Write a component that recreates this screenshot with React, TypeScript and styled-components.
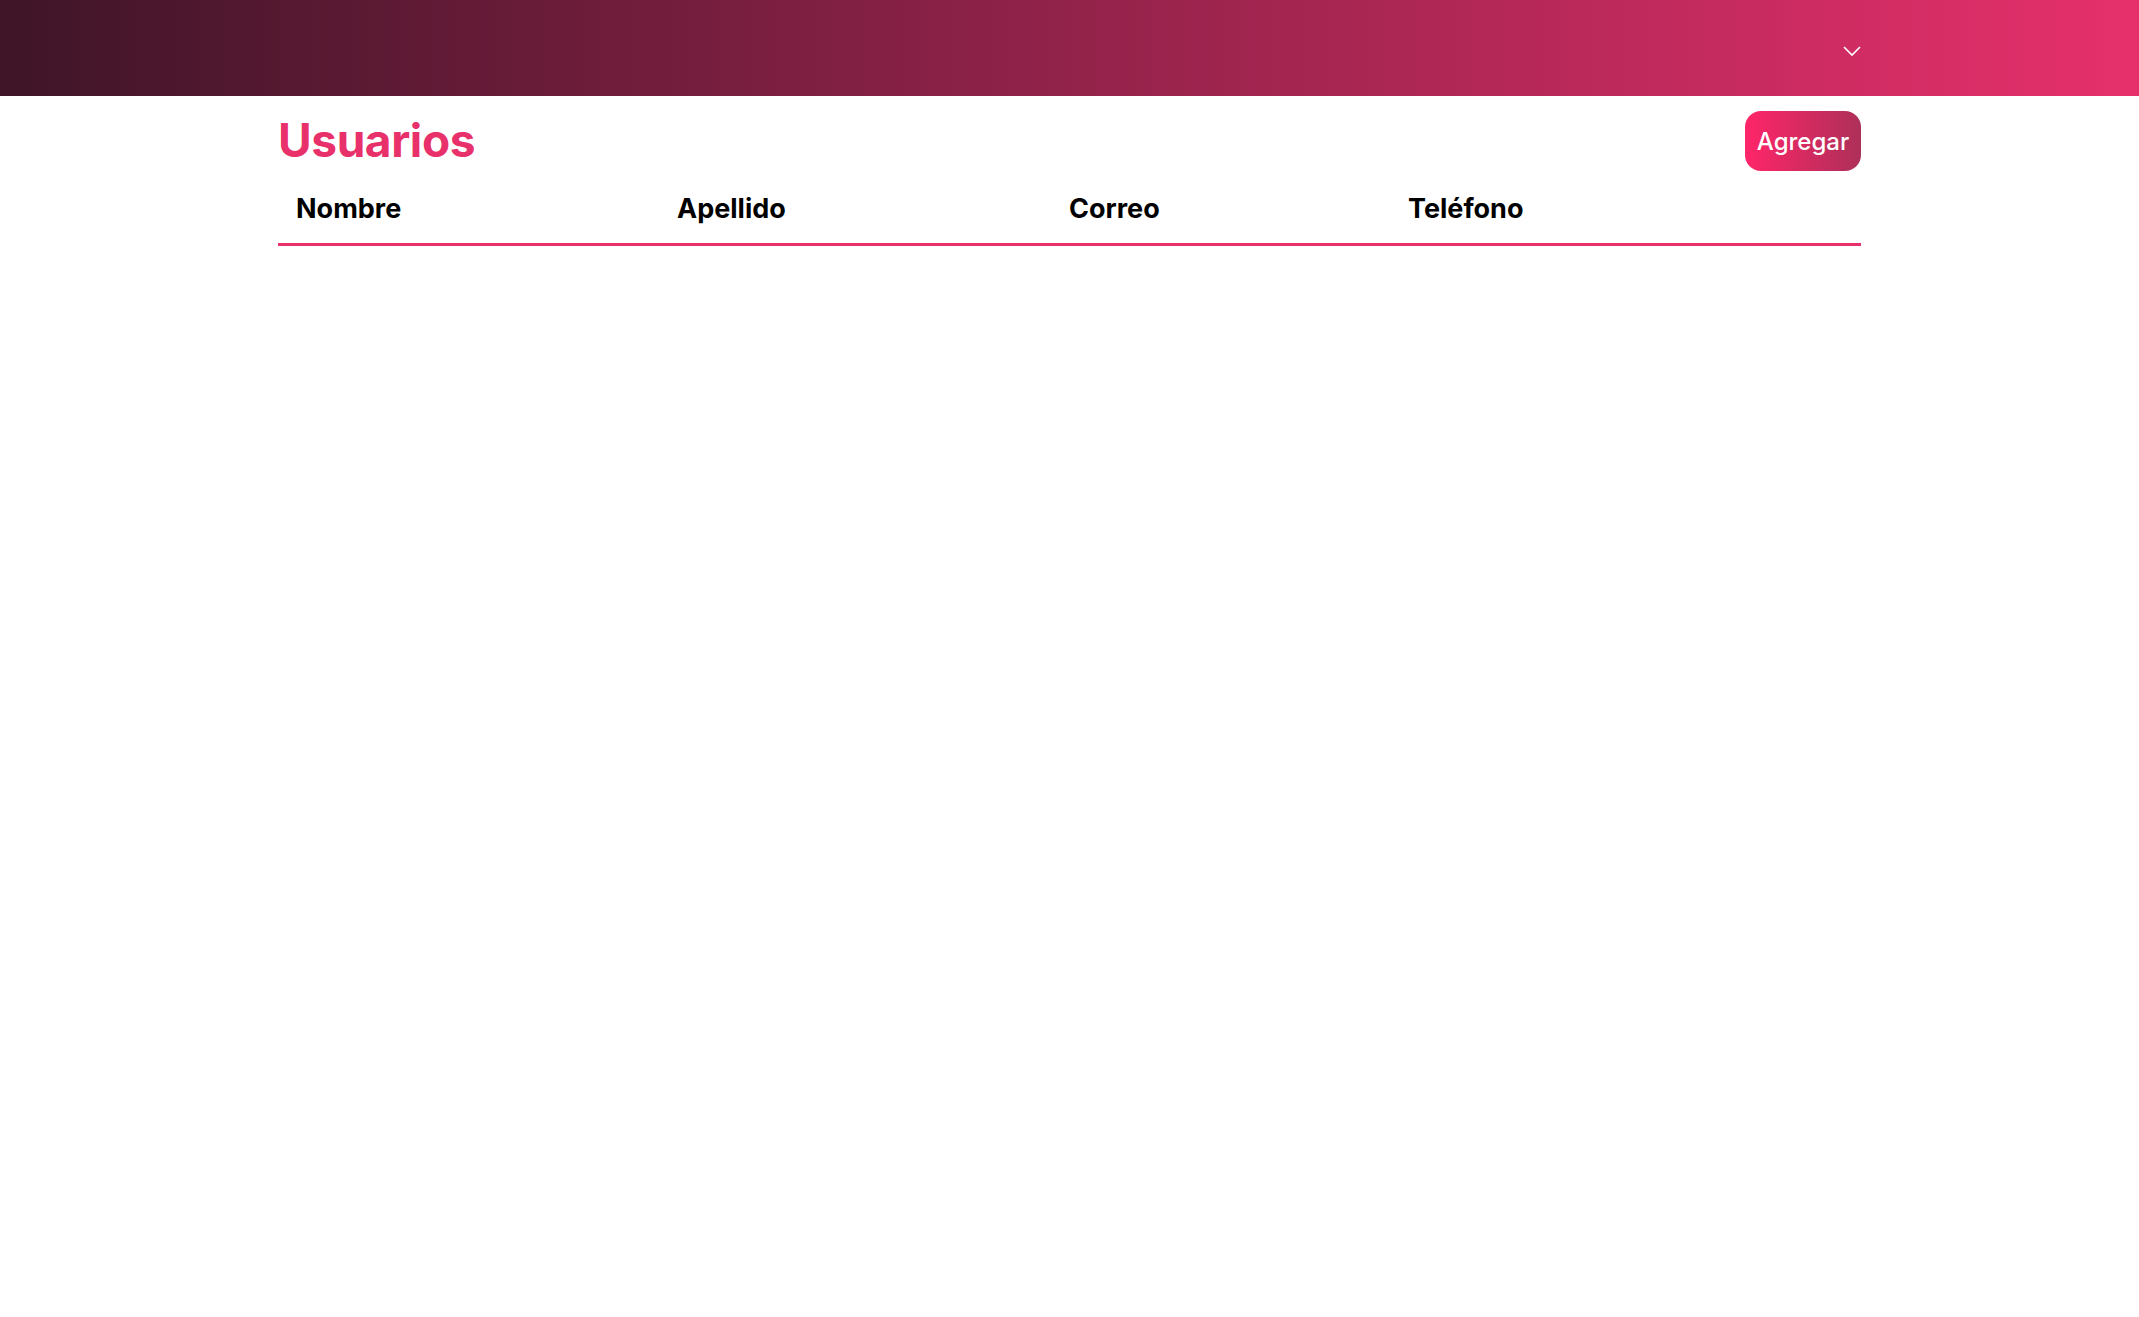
import React from 'react'
import styled, { createGlobalStyle } from 'styled-components'

const GlobalStyle = createGlobalStyle`
  body {
    margin: 0;
    font-family: Inter, 'Liberation Sans', sans-serif;
    background: #ffffff;
  }
`

const NavBar = styled.header`
  height: 96px;
  background: linear-gradient(to right, #3f1527, #e6306c);
  display: flex;
  justify-content: center;
`

const NavInner = styled.div`
  width: 1583px;
  display: flex;
  align-items: center;
  justify-content: flex-end;
  padding-top: 6px;
  box-sizing: border-box;
`

const MenuToggle = styled.button`
  background: none;
  border: none;
  padding: 0;
  display: flex;
  cursor: pointer;
`

const Main = styled.main`
  width: 1583px;
  margin: 0 auto;
  padding-top: 15px;
`

const TitleRow = styled.div`
  display: flex;
  align-items: center;
  justify-content: space-between;
  height: 60px;
`

const Title = styled.h1`
  margin: 0 0 2px;
  font-size: 46px;
  font-weight: 700;
  color: #e8306a;
  letter-spacing: -0.4px;
`

const AddButton = styled.button`
  height: 60px;
  width: 116px;
  border: none;
  border-radius: 16px;
  background: linear-gradient(to right, #ff2569, #ad3059);
  color: #ffffff;
  font-family: Inter, 'Liberation Sans', sans-serif;
  font-size: 24px;
  font-weight: 500;
  cursor: pointer;
`

const HeadRow = styled.div`
  display: grid;
  grid-template-columns: 381px 392px 339px 1fr;
  border-bottom: 3px solid #e8306a;
  margin-top: 3px;
`

const HeadCell = styled.div`
  padding: 17px 18px 16px;
  font-size: 27px;
  font-weight: 700;
  color: #000000;
  line-height: 36px;
`

const columns = ['Nombre', 'Apellido', 'Correo', 'Teléfono']

export default function App() {
  return (
    <>
      <GlobalStyle />
      <NavBar>
        <NavInner>
          <MenuToggle aria-label="menu">
            <svg width="18" height="11" viewBox="0 0 18 11" fill="none">
              <path d="M1 1l8 8 8-8" stroke="#ffffff" strokeWidth="1.6" />
            </svg>
          </MenuToggle>
        </NavInner>
      </NavBar>
      <Main>
        <TitleRow>
          <Title>Usuarios</Title>
          <AddButton>Agregar</AddButton>
        </TitleRow>
        <HeadRow>
          {columns.map((c) => (
            <HeadCell key={c}>{c}</HeadCell>
          ))}
        </HeadRow>
      </Main>
    </>
  )
}
